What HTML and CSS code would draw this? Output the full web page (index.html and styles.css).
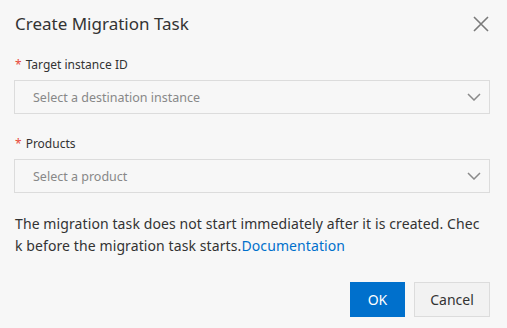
FILE: index.html
```html
<!DOCTYPE html>
<html lang="en">
<head>
    <meta charset="UTF-8">
    <meta name="viewport" content="width=device-width, initial-scale=1.0">
    <title>Create Migration Task</title>
    <link rel="stylesheet" href="styles.css">
</head>
<body>
    <div class="dialog">
        <header class="dialog-header">
            <h1>Create Migration Task</h1>
            <button class="close-button" aria-label="Close">
                <svg width="16" height="16" viewBox="0 0 16 16">
                    <path d="M1 1L15 15M15 1L1 15" stroke="#7a7a7a" stroke-width="1.6" fill="none"/>
                </svg>
            </button>
        </header>
        <main class="dialog-body">
            <div class="field">
                <label class="field-label"><span class="required">*</span>Target instance ID</label>
                <div class="select">
                    <span class="placeholder">Select a destination instance</span>
                    <svg class="chevron" width="14" height="8" viewBox="0 0 14 8">
                        <path d="M1 1L7 7L13 1" stroke="#8a8a8a" stroke-width="1.5" fill="none"/>
                    </svg>
                </div>
            </div>
            <div class="field">
                <label class="field-label"><span class="required">*</span>Products</label>
                <div class="select">
                    <span class="placeholder">Select a product</span>
                    <svg class="chevron" width="14" height="8" viewBox="0 0 14 8">
                        <path d="M1 1L7 7L13 1" stroke="#8a8a8a" stroke-width="1.5" fill="none"/>
                    </svg>
                </div>
            </div>
            <p class="notice">The migration task does not start immediately after it is created. Check before the migration task starts.<a href="#">Documentation</a></p>
        </main>
        <footer class="dialog-footer">
            <button class="btn btn-primary">OK</button>
            <button class="btn btn-default">Cancel</button>
        </footer>
    </div>
</body>
</html>
```

FILE: styles.css
```css
body {
    font-family: "Noto Sans", "Open Sans", sans-serif;
    margin: 0;
    padding: 0;
    background-color: #f7f7f7;
    color: #333;
}

.dialog {
    width: 507px;
    height: 328px;
    box-sizing: border-box;
    padding: 0 17px 0 14px;
}

.dialog-header {
    display: flex;
    justify-content: space-between;
    align-items: center;
    height: 47px;
    padding-left: 1px;
}

h1 {
    margin: 0;
    font-size: 17px;
    font-weight: 400;
    color: #333;
}

.close-button {
    background: none;
    border: none;
    padding: 0;
    margin-right: 1px;
    cursor: pointer;
    display: flex;
}

.field {
    margin-top: 9px;
}

.field + .field {
    margin-top: 21px;
}

.field-label {
    display: block;
    font-size: 12px;
    line-height: 18px;
    padding-left: 1px;
    margin-bottom: 6px;
    color: #333;
}

.required {
    color: #e84738;
    margin-right: 4px;
}

.select {
    display: flex;
    justify-content: space-between;
    align-items: center;
    height: 34px;
    box-sizing: border-box;
    border: 1px solid #dcdcdc;
    padding: 0 8px 0 18px;
}

.placeholder {
    font-size: 12.5px;
    color: #888;
}

.notice {
    margin: 20px 3px 0 1px;
    font-size: 14px;
    line-height: 22px;
    letter-spacing: 0.1px;
    color: #333;
    word-break: break-all;
}

.notice a {
    color: #0070cc;
    text-decoration: none;
}

.dialog-footer {
    display: flex;
    justify-content: flex-end;
    gap: 9px;
    margin-top: 25px;
}

.btn {
    height: 35px;
    font-family: inherit;
    font-size: 14px;
    border-radius: 0;
    cursor: pointer;
}

.btn-primary {
    width: 55px;
    background-color: #0070cc;
    color: #fff;
    border: none;
}

.btn-default {
    width: 76px;
    background-color: #f2f2f2;
    color: #333;
    border: 1px solid #dcdcdc;
}
```
